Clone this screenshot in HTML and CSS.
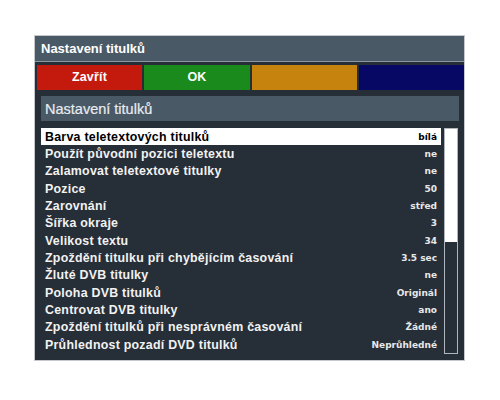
FILE: index.html
```html
<!DOCTYPE html>
<html>
<head>
<meta charset="utf-8">
<link rel="stylesheet" href="styles.css">
</head>
<body>
<div class="dialog">
  <div class="titlebar">Nastavení titulků</div>
  <div class="buttons">
    <div class="btn red">Zavřít</div>
    <div class="btn green">OK</div>
    <div class="btn orange"></div>
    <div class="btn navy"></div>
  </div>
  <div class="subheader">Nastavení titulků</div>
  <div class="listarea">
    <div class="list">
      <div class="row selected"><span class="label">Barva teletextových titulků</span><span class="value">bílá</span></div>
      <div class="row"><span class="label">Použít původní pozici teletextu</span><span class="value">ne</span></div>
      <div class="row"><span class="label">Zalamovat teletextové titulky</span><span class="value">ne</span></div>
      <div class="row"><span class="label">Pozice</span><span class="value">50</span></div>
      <div class="row"><span class="label">Zarovnání</span><span class="value">střed</span></div>
      <div class="row"><span class="label">Šířka okraje</span><span class="value">3</span></div>
      <div class="row"><span class="label">Velikost textu</span><span class="value">34</span></div>
      <div class="row"><span class="label">Zpoždění titulku při chybějícím časování</span><span class="value">3.5 sec</span></div>
      <div class="row"><span class="label">Žluté DVB titulky</span><span class="value">ne</span></div>
      <div class="row"><span class="label">Poloha DVB titulků</span><span class="value">Originál</span></div>
      <div class="row"><span class="label">Centrovat DVB titulky</span><span class="value">ano</span></div>
      <div class="row"><span class="label">Zpoždění titulků při nesprávném časování</span><span class="value">Žádné</span></div>
      <div class="row"><span class="label">Průhlednost pozadí DVD titulků</span><span class="value">Neprůhledné</span></div>
    </div>
    <div class="scrollbar"><div class="thumb"></div></div>
  </div>
</div>
</body>
</html>
```
FILE: styles.css
```css
html, body {
  margin: 0;
  padding: 0;
  background: #ffffff;
}
body {
  font-family: "Liberation Sans", Arial, sans-serif;
}
.dialog {
  margin: 35px 0 0 34px;
  width: 431px;
  height: 326px;
  box-sizing: border-box;
  border: 1px solid #c4c8cc;
  background: #262e38;
  display: flex;
  flex-direction: column;
}
.titlebar {
  height: 25px;
  background: #4a5966;
  border-bottom: 1px solid #8c969e;
  color: #ffffff;
  font-weight: bold;
  font-size: 13px;
  line-height: 25px;
  padding-left: 6px;
}
.buttons {
  margin-top: 3px;
  padding: 0 2px;
  display: grid;
  grid-template-columns: 105px 106px 105px 105px;
  column-gap: 2px;
  height: 25px;
}
.btn {
  color: #ffffff;
  font-weight: bold;
  font-size: 12.5px;
  letter-spacing: 0.2px;
  text-align: center;
  line-height: 25px;
}
.red { background: #c41a0e; }
.green { background: #1a8a1c; }
.orange { background: #c6840f; }
.navy { background: #060864; }
.subheader {
  margin: 6px 5px 0 6px;
  height: 25px;
  background: #4a5966;
  color: #e8ecf0;
  font-size: 14.5px;
  line-height: 26px;
  padding-left: 4px;
  -webkit-text-stroke: 0.2px #e8ecf0;
}
.listarea {
  margin: 7px 5px 0 6px;
  display: flex;
  gap: 3px;
}
.list {
  width: 400px;
}
.row {
  height: 17.35px;
  display: flex;
  justify-content: space-between;
  align-items: center;
  padding: 0 4px 0 4px;
  color: #f2f2f2;
}
.label {
  font-weight: bold;
  font-size: 12.4px;
  letter-spacing: 0.25px;
}
.value {
  font-family: "DejaVu Sans", Verdana, sans-serif;
  font-weight: bold;
  font-size: 9px;
  color: #e8e8e8;
}
.row.selected {
  background: #ffffff;
  color: #000000;
}
.row.selected .value {
  color: #000000;
}
.scrollbar {
  width: 14px;
  height: 226px;
  box-sizing: border-box;
  border: 1px solid #b0b6bc;
  background: #262e38;
}
.thumb {
  height: 113px;
  background: #ffffff;
}
```
